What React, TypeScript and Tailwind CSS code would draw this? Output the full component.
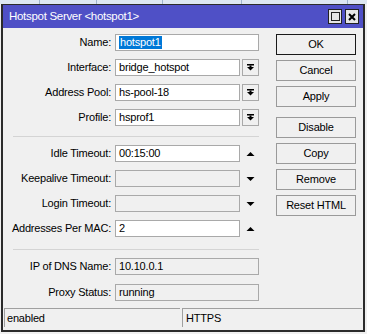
import React from "react";

type Row = {
  label: string;
  value?: string;
  kind: "text" | "select" | "up" | "down" | "readonly" | "selected";
  disabled?: boolean;
};

const topRows: Row[] = [
  { label: "Name:", value: "hotspot1", kind: "selected" },
  { label: "Interface:", value: "bridge_hotspot", kind: "select" },
  { label: "Address Pool:", value: "hs-pool-18", kind: "select" },
  { label: "Profile:", value: "hsprof1", kind: "select" },
];

const midRows: Row[] = [
  { label: "Idle Timeout:", value: "00:15:00", kind: "up" },
  { label: "Keepalive Timeout:", kind: "down", disabled: true },
  { label: "Login Timeout:", kind: "down", disabled: true },
  { label: "Addresses Per MAC:", value: "2", kind: "up" },
];

const bottomRows: Row[] = [
  { label: "IP of DNS Name:", value: "10.10.0.1", kind: "readonly" },
  { label: "Proxy Status:", value: "running", kind: "readonly" },
];

const DropIcon = () => (
  <svg width="9" height="9" viewBox="0 0 9 9">
    <rect x="1" y="1" width="7" height="1.5" fill="#000" />
    <path d="M1 4 H8 L4.5 7.5 Z" fill="#000" />
    <rect x="3.5" y="2.5" width="2" height="2" fill="#000" />
  </svg>
);

const Triangle = ({ up }: { up: boolean }) => (
  <svg width="9" height="6" viewBox="0 0 9 6">
    {up ? <path d="M0.5 5 H8.5 L4.5 1 Z" fill="#000" /> : <path d="M0.5 1 H8.5 L4.5 5 Z" fill="#000" />}
  </svg>
);

const FieldRow = ({ row }: { row: Row }) => {
  const grey = row.disabled || row.kind === "readonly";
  const short = row.kind !== "selected" && row.kind !== "readonly";
  return (
    <div className="flex h-[17px] items-center">
      <div className="w-[112px] pr-[4px] text-right leading-none">{row.label}</div>
      <div
        className={`flex h-[17px] items-center border border-[#a9a9a9] pl-[3px] leading-none ${
          short ? "w-[125px]" : "w-[144px]"
        } ${grey ? "bg-[#f0f0f0]" : "bg-white"}`}
      >
        {row.kind === "selected" ? (
          <span className="bg-[#0078d7] px-px py-[1px] text-white">{row.value}</span>
        ) : (
          <span>{row.value}</span>
        )}
      </div>
      {row.kind === "select" && (
        <div className="ml-[2px] flex h-[17px] w-[17px] items-center justify-center border border-[#a9a9a9] bg-[#f0f0f0]">
          <DropIcon />
        </div>
      )}
      {(row.kind === "up" || row.kind === "down") && (
        <div className="ml-[2px] flex h-[17px] w-[17px] items-center justify-center">
          <Triangle up={row.kind === "up"} />
        </div>
      )}
    </div>
  );
};

const Btn = ({ label, def }: { label: string; def?: boolean }) => (
  <div
    className={`flex h-[21px] w-[80px] items-center justify-center border bg-[#f0f0f0] leading-none ${
      def ? "border-[#1a1a1a]" : "border-[#9a9a9a]"
    }`}
  >
    {label}
  </div>
);

export default function App() {
  return (
    <div
      className="relative h-[334px] w-[367px] overflow-hidden bg-[#f0f0f0] text-[11px] tracking-[-0.2px] text-black"
      style={{ fontFamily: "'Liberation Sans', Arial, sans-serif" }}
    >
      {/* window behind */}
      <div className="flex h-[4px] bg-[#dde7f2]">
        <div className="w-[40px] border-r border-[#9fb4cc]" />
        <div className="w-[57px] border-r border-[#9fb4cc]" />
        <div className="w-[66px] border-r border-[#9fb4cc]" />
        <div className="w-[79px] border-r border-[#9fb4cc]" />
        <div className="w-[106px] border-r border-[#9fb4cc]" />
      </div>

      <div className="ml-[1px] flex h-[328px] w-[364px] flex-col border-2 border-t border-[#2b2b2b] bg-[#f0f0f0]">
        {/* title bar */}
        <div className="flex h-[23px] items-center bg-[#4f50c6] pl-[6px] pr-[4px]">
          <span className="flex-1 text-[11.5px] tracking-[-0.3px] text-white">Hotspot Server &lt;hotspot1&gt;</span>
          <div className="flex gap-[3px]">
            <div className="flex h-[15px] w-[14px] items-center justify-center border border-[#222] bg-[#e6e6e6]">
              <div className="h-[9px] w-[9px] border border-[#222]" />
            </div>
            <div className="flex h-[15px] w-[14px] items-center justify-center border border-[#222] bg-[#e6e6e6]">
              <svg width="8" height="8" viewBox="0 0 8 8">
                <path d="M1 1 L7 7 M7 1 L1 7" stroke="#000" strokeWidth="2" />
              </svg>
            </div>
          </div>
        </div>

        {/* body */}
        <div className="flex flex-1">
          <div className="flex w-[262px] flex-col pt-[6px]">
            <div className="flex flex-col gap-[8px]">
              {topRows.map((r) => (
                <FieldRow key={r.label} row={r} />
              ))}
            </div>
            <div className="ml-[10px] mt-[10px] mb-[8px] h-px w-[246px] bg-[#d4d4d4]" />
            <div className="flex flex-col gap-[8px]">
              {midRows.map((r) => (
                <FieldRow key={r.label} row={r} />
              ))}
            </div>
            <div className="ml-[10px] mt-[12px] mb-[8px] h-px w-[246px] bg-[#d4d4d4]" />
            <div className="flex flex-col gap-[9px]">
              {bottomRows.map((r) => (
                <FieldRow key={r.label} row={r} />
              ))}
            </div>
          </div>
          <div className="flex flex-col pl-[11px] pt-[6px]">
            <div className="flex flex-col gap-[5px]">
              <Btn label="OK" def />
              <Btn label="Cancel" />
              <Btn label="Apply" />
            </div>
            <div className="mt-[10px] flex flex-col gap-[5px]">
              <Btn label="Disable" />
              <Btn label="Copy" />
              <Btn label="Remove" />
              <Btn label="Reset HTML" />
            </div>
          </div>
        </div>

        {/* status bar */}
        <div className="mb-[3px] flex h-[19px] gap-[2px] px-px">
          <div className="flex w-[176px] items-center border-l border-t border-[#a0a0a0] pl-[2px] leading-none">
            enabled
          </div>
          <div className="flex flex-1 items-center border-l border-t border-[#a0a0a0] pl-[3px] leading-none">
            HTTPS
          </div>
        </div>
      </div>
    </div>
  );
}
